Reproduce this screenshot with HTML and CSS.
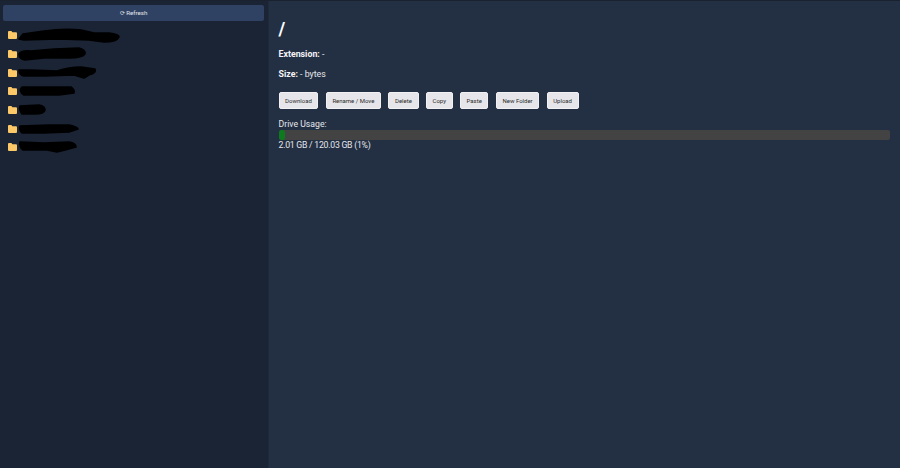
FILE: index.html
```html
<!DOCTYPE html>
<html lang="en">
<head>
<meta charset="utf-8">
<title>File Manager</title>
<link rel="stylesheet" href="styles.css">
</head>
<body>
<div class="app">
  <aside class="sidebar">
    <button class="refresh">⟳ Refresh</button>
    <ul class="tree">
      <li class="row"><svg class="folder" viewBox="0 0 9 8"><path d="M0 1 Q0 0 1 0 H3.4 L4.4 1.2 H8 Q9 1.2 9 2.2 V7 Q9 8 8 8 H1 Q0 8 0 7Z"/></svg><svg class="scrib w100" viewBox="0 0 100 14"><path d="M0 11 L4 6 L25 3 Q45 0 62 2 L75 5 L90 5 Q100 6 100 9 Q98 14 85 14 L70 12 L40 11 L5 12Z"/></svg></li>
      <li class="row"><svg class="folder" viewBox="0 0 9 8"><path d="M0 1 Q0 0 1 0 H3.4 L4.4 1.2 H8 Q9 1.2 9 2.2 V7 Q9 8 8 8 H1 Q0 8 0 7Z"/></svg><svg class="scrib w66" viewBox="0 0 66 12"><path d="M0 6 Q2 2 12 3 L35 1 L60 0 Q67 2 66 6 Q64 10 50 10 L25 10 L6 12 Q0 11 0 6Z"/></svg></li>
      <li class="row"><svg class="folder" viewBox="0 0 9 8"><path d="M0 1 Q0 0 1 0 H3.4 L4.4 1.2 H8 Q9 1.2 9 2.2 V7 Q9 8 8 8 H1 Q0 8 0 7Z"/></svg><svg class="scrib w77" viewBox="0 0 77 12"><path d="M0 3 L12 3 L38 4 Q50 0 62 0 L76 2 Q78 6 70 8 L65 11 L55 8 L25 9 L5 9 Q0 8 0 3Z"/></svg></li>
      <li class="row"><svg class="folder" viewBox="0 0 9 8"><path d="M0 1 Q0 0 1 0 H3.4 L4.4 1.2 H8 Q9 1.2 9 2.2 V7 Q9 8 8 8 H1 Q0 8 0 7Z"/></svg><svg class="scrib w56" viewBox="0 0 56 8"><path d="M3 0 L30 0 L52 0 Q56 3 55 6 L40 8 L5 8 Q-1 4 3 0Z"/></svg></li>
      <li class="row"><svg class="folder" viewBox="0 0 9 8"><path d="M0 1 Q0 0 1 0 H3.4 L4.4 1.2 H8 Q9 1.2 9 2.2 V7 Q9 8 8 8 H1 Q0 8 0 7Z"/></svg><svg class="scrib w26" viewBox="0 0 26 9"><path d="M1 1 L20 0 Q26 1 26 5 Q25 9 16 9 L3 9 Q0 5 1 1Z"/></svg></li>
      <li class="row"><svg class="folder" viewBox="0 0 9 8"><path d="M0 1 Q0 0 1 0 H3.4 L4.4 1.2 H8 Q9 1.2 9 2.2 V7 Q9 8 8 8 H1 Q0 8 0 7Z"/></svg><svg class="scrib w59" viewBox="0 0 59 8"><path d="M1 1 L30 0 L50 0 Q59 2 59 4 L50 7 L25 8 L3 8 Q0 5 1 1Z"/></svg></li>
      <li class="row"><svg class="folder" viewBox="0 0 9 8"><path d="M0 1 Q0 0 1 0 H3.4 L4.4 1.2 H8 Q9 1.2 9 2.2 V7 Q9 8 8 8 H1 Q0 8 0 7Z"/></svg><svg class="scrib w57" viewBox="0 0 57 10"><path d="M1 0 L25 1 L50 0 Q57 1 57 5 L46 8 L38 10 L28 8 L4 8 Q0 5 1 0Z"/></svg></li>
    </ul>
  </aside>
  <main class="main">
    <h2 class="title">/</h2>
    <p class="meta"><strong>Extension:</strong> -</p>
    <p class="meta"><strong>Size:</strong> - bytes</p>
    <div class="actions">
      <button class="btn">Download</button>
      <button class="btn">Rename / Move</button>
      <button class="btn">Delete</button>
      <button class="btn">Copy</button>
      <button class="btn">Paste</button>
      <button class="btn">New Folder</button>
      <button class="btn">Upload</button>
    </div>
    <div class="usage">
      <div>Drive Usage:</div>
      <div class="bar"><div class="fill" style="width:1%"></div></div>
      <div class="usage-value">2.01 GB / 120.03 GB (1%)</div>
    </div>
  </main>
</div>
</body>
</html>
```
FILE: styles.css
```css
* { box-sizing: border-box; }
html, body { height: 100%; margin: 0; }
body {
  font-family: Roboto, "Noto Sans", sans-serif;
  background: #232f43;
  color: #e5e7eb;
  overflow: hidden;
}
.app { display: flex; height: 468px; border-top: 1px solid #1a2230; }
.sidebar {
  width: 269px;
  flex: none;
  background: #1b2434;
  padding: 4px 4px 0 3px;
  border-right: 1px solid #202a3b;
}
.refresh {
  display: block;
  width: 100%;
  height: 16px;
  padding: 0;
  border: 0;
  border-radius: 2px;
  background: #2f4263;
  color: #e5e7eb;
  font: 6.2px/16px Roboto, sans-serif;
  text-align: center;
}
.tree { list-style: none; margin: 5px 0 0; padding: 0; }
.row { display: flex; align-items: center; height: 18.67px; padding-left: 5px; }
.folder { width: 9px; height: 8px; flex: none; fill: #fdc868; margin-right: 2px; }
.scrib { fill: #000; stroke: #000; stroke-width: 1.6; stroke-linejoin: round; overflow: visible; flex: none; display: block; }
.w100 { width: 100px; height: 14px; }
.w66 { width: 66px; height: 12px; }
.w77 { width: 77px; height: 12px; }
.w56 { width: 56px; height: 8px; }
.w26 { width: 26px; height: 9px; }
.w59 { width: 59px; height: 8px; }
.w57 { width: 57px; height: 10px; }
.main { flex: 1; padding: 0 10px 0 9.5px; }
.title { margin: 17px 0 0; font-size: 18px; line-height: 21px; font-weight: 700; color: #fff; }
.meta { margin: 9px 0 0; font-size: 8.8px; line-height: 13px; color: #e5e7eb; }
.meta + .meta { margin-top: 7px; }
.meta strong { color: #f3f4f6; }
.actions { display: flex; gap: 7.4px; margin-top: 11px; }
.btn {
  height: 17px;
  padding: 0 5.6px;
  border: 1px solid #f1f1f4;
  border-radius: 2px;
  background: #e6e6ea;
  color: #2b2b2b;
  font: 400 6px/15px Roboto, sans-serif;
}
.usage { margin-top: 10px; font-size: 8.7px; line-height: 11px; color: #e5e7eb; }
.usage-value { letter-spacing: -0.25px; }
.bar { height: 10px; background: #434343; border-radius: 2px; overflow: hidden; }
.fill { height: 100%; background: #0d7a1d; border-radius: 2px; min-width: 6px; }
```
